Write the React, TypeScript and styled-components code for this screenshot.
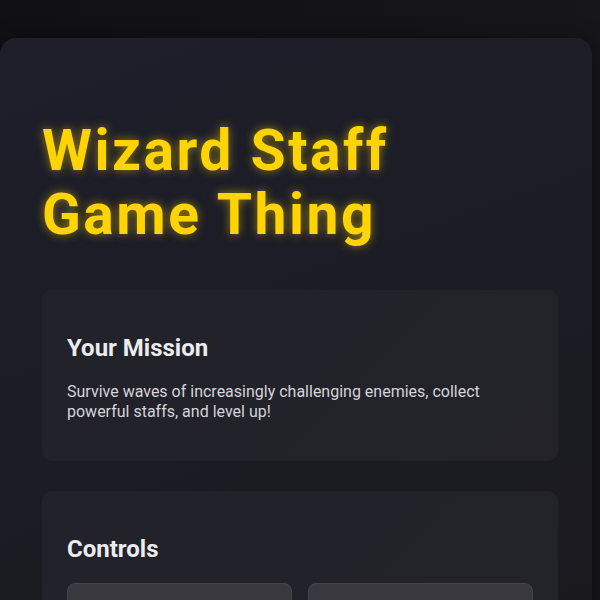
import React from "react";
import styled, { createGlobalStyle } from "styled-components";

const Global = createGlobalStyle`
  html, body { margin: 0; padding: 0; background: #121215; }
  body { font-family: Roboto, "Liberation Sans", sans-serif; color: #e6e6ea; overflow: hidden; }
`;

const Page = styled.div`
  min-height: 600px;
  padding-top: 38px;
  background: linear-gradient(90deg, #111113 0%, #16161b 100%);
`;

const Panel = styled.main`
  width: 592px;
  box-sizing: border-box;
  border-radius: 16px;
  padding: 81px 34px 40px 42px;
  background: linear-gradient(160deg, #1e1f2b 0%, #1b1b22 60%, #18181c 100%);
  box-shadow: 0 0 20px rgba(0, 0, 0, 0.4);
`;

const Title = styled.h1`
  margin: 0 0 43px;
  font-size: 57px;
  line-height: 64px;
  font-weight: 700;
  letter-spacing: 2.5px;
  color: #ffd400;
  text-shadow: 0 0 10px rgba(255, 208, 0, 0.55);
`;

const Section = styled.section`
  background: linear-gradient(135deg, #21222a 0%, #232329 100%);
  border-radius: 10px;
  padding: 24px 25px;
  margin-bottom: 30px;
`;

const Heading = styled.h2`
  margin: 20px 0;
  font-size: 24px;
  line-height: 28px;
  font-weight: 700;
  color: #ececf0;
`;

const Text = styled.p`
  margin: 20px 0 15px;
  font-size: 16px;
  line-height: 20px;
  color: #d4d4da;
  max-width: 440px;
`;

const Grid = styled.div`
  display: grid;
  grid-template-columns: 225px 225px;
  gap: 16px;
`;

const Key = styled.div`
  height: 80px;
  border-radius: 8px;
  background: #38383e;
  border: 1px solid #44444b;
`;

export default function App() {
  return (
    <>
      <Global />
      <Page>
        <Panel>
          <Title>
            Wizard Staff
            <br />
            Game Thing
          </Title>
          <Section>
            <Heading>Your Mission</Heading>
            <Text>
              Survive waves of increasingly challenging enemies, collect powerful staffs, and level up!
            </Text>
          </Section>
          <Section>
            <Heading>Controls</Heading>
            <Grid>
              <Key />
              <Key />
            </Grid>
          </Section>
        </Panel>
      </Page>
    </>
  );
}
